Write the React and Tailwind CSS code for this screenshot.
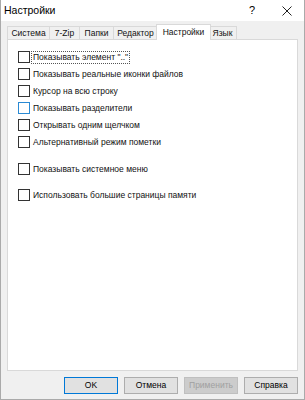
import React from "react";

const tabs = [
  { t: "Система", w: "w-[43px]" },
  { t: "7-Zip", w: "w-[31px]" },
  { t: "Папки", w: "w-[35px]" },
  { t: "Редактор", w: "w-[45px]" },
  { t: "Настройки", w: "w-[55px]", sel: true },
  { t: "Язык", w: "w-[29px]" },
];

const options = [
  { label: "Показывать элемент \"..\"", focus: true, mt: "mt-[11px]" },
  { label: "Показывать реальные иконки файлов", mt: "mt-[5px]" },
  { label: "Курсор на всю строку", mt: "mt-[5px]" },
  { label: "Показывать разделители", hover: true, mt: "mt-[5px]" },
  { label: "Открывать одним щелчком", mt: "mt-[5px]" },
  { label: "Альтернативный режим пометки", mt: "mt-[5px]" },
  { label: "Показывать системное меню", mt: "mt-[15px]" },
  { label: "Использовать большие страницы памяти", mt: "mt-[14px]" },
];

const Check = ({ label, focus, hover, mt }) => (
  <div className={`flex items-center h-[12px] ${mt}`}>
    <div
      className={`w-[12px] h-[12px] bg-white border ${
        hover ? "border-[#2a8ad4]" : "border-[#333333]"
      }`}
    />
    <span
      className={`ml-[1px] px-[1px] leading-[11px] ${
        focus ? "border border-dotted border-[#555]" : "border border-transparent"
      }`}
    >
      {label}
    </span>
  </div>
);

const Btn = ({ children, def, disabled }) => (
  <div
    className={`w-[54px] h-[17px] flex items-center justify-center border ${
      def
        ? "border-[#0078d7] bg-[#e1e1e1] text-black"
        : disabled
        ? "border-[#bfbfbf] bg-[#cccccc] text-[#a0a0a0]"
        : "border-[#adadad] bg-[#e1e1e1] text-black"
    }`}
  >
    {children}
  </div>
);

export default function App() {
  return (
    <div
      className="w-[305px] h-[400px] bg-[#f0f0f0] border border-[#aaaaaa] border-t-0 flex flex-col text-[8.5px] text-[#111]"
      style={{ fontFamily: "'Liberation Sans', Arial, sans-serif" }}
    >
      <div className="h-[21px] bg-white flex items-center pl-[3px] text-[10.5px] text-black">
        <span>Настройки</span>
        <span className="ml-auto mr-[27px] text-[11px]">?</span>
        <svg width="10" height="10" viewBox="0 0 10 10" className="mr-[12px]">
          <path d="M0.5 0.5L9.5 9.5M9.5 0.5L0.5 9.5" stroke="#222" strokeWidth="1" />
        </svg>
      </div>

      <div className="flex items-end h-[19px] ml-[6px]">
        {tabs.map(({ t, w, sel }) => (
          <div
            key={t}
            className={
              sel
                ? `${w} h-[16px] bg-white border border-b-0 border-[#d9d9d9] -mx-[2px] relative z-10 flex items-center justify-center`
                : `${w} h-[14px] bg-[#f0f0f0] border border-b-0 border-[#d9d9d9] -ml-[1px] first:ml-0 flex items-center justify-center`
            }
          >
            {t}
          </div>
        ))}
      </div>

      <div className="mx-[6px] h-[332px] bg-white border border-[#d9d9d9] -mt-[1px] pl-[10px] flex flex-col">
        {options.map((o) => (
          <Check key={o.label} {...o} />
        ))}
      </div>

      <div className="flex justify-end gap-[6px] mr-[6px] mt-[6px]">
        <Btn def>OK</Btn>
        <Btn>Отмена</Btn>
        <Btn disabled>Применить</Btn>
        <Btn>Справка</Btn>
      </div>
    </div>
  );
}
